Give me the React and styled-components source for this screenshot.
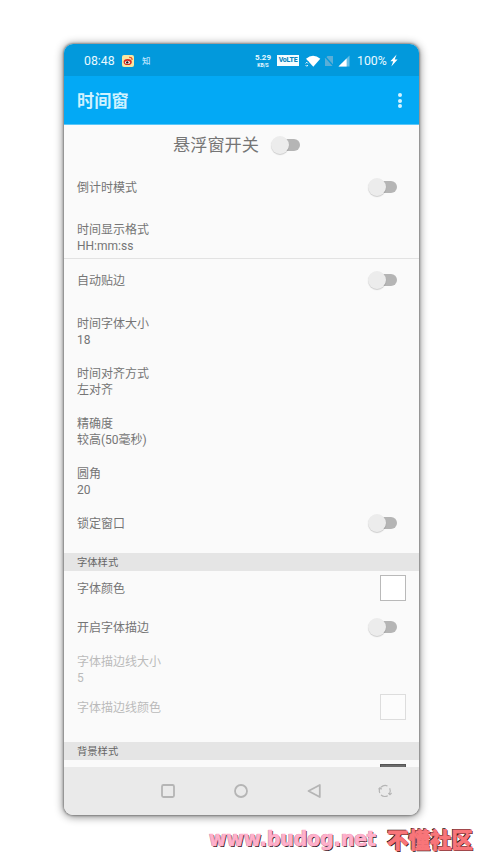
import styled, { createGlobalStyle } from "styled-components";

const countdownItems = [
	{ title: "倒计时模式", type: "switch", height: 42 },
	{ title: "时间显示格式", value: "HH:mm:ss" },
];

const windowItems = [
	{ title: "自动贴边", type: "switch" },
	{ title: "时间字体大小", value: "18" },
	{ title: "时间对齐方式", value: "左对齐" },
	{ title: "精确度", value: "较高(50毫秒)" },
	{ title: "圆角", value: "20" },
	{ title: "锁定窗口", type: "switch" },
];

const fontItems = [
	{ title: "字体颜色", type: "color", height: 35 },
	{ title: "开启字体描边", type: "switch" },
	{ title: "字体描边线大小", value: "5", disabled: true, compact: true },
	{ title: "字体描边线颜色", type: "color", height: 42, disabled: true },
];

const StatusBar = () => {
	return (
		<StatusContainer>
			<Clock>08:48</Clock>
			<WeiboIcon viewBox="0 0 12 12">
				<rect width="12" height="12" rx="2" fill="#f8e6a0" />
				<ellipse cx="5.7" cy="7" rx="4.1" ry="3.1" fill="#dc2b20" />
				<ellipse cx="5.5" cy="7.4" rx="2.5" ry="1.7" fill="#fff" />
				<circle cx="5.3" cy="7.4" r="1.2" fill="#26130f" />
				<path d="M7 2.3q3-.3 3.1 2.7" stroke="#e5502a" strokeWidth="1.2" fill="none" />
			</WeiboIcon>
			<Zhihu>知</Zhihu>
			<Speed>
				<b>5.29</b>
				<small>KB/S</small>
			</Speed>
			<Volte>VoLTE</Volte>
			<WifiIcon viewBox="0 0 16 12">
				<path d="M1 3.8Q8-2.1 15.3 3.8L8.3 11.7Z" fill="#fff" />
				<path d="M.3 6.5h3.4v5.5H.3z" fill="#0299dc" />
				<path d="M.6 8.5 1.8 7.2 3 8.5M.6 10 1.8 11.3 3 10" stroke="#fff" strokeWidth=".9" fill="none" />
			</WifiIcon>
			<SimIcon viewBox="0 0 10 12">
				<path d="M3.5 1H9v10H1V3.5z" fill="#5aaed7" />
				<path d="M.5 1 9.5 11" stroke="#0299dc" strokeWidth="1.3" />
			</SimIcon>
			<SignalIcon viewBox="0 0 12 12">
				<path d="M11.5.5v11H.5z" fill="#68bfe6" />
				<path d="M8.6 3.4v8.1H.5z" fill="#fff" />
			</SignalIcon>
			<Battery>100%</Battery>
			<BoltIcon viewBox="0 0 8 13">
				<path d="M6.6.5.4 7.3h2.8L1.3 12.5 7.6 5.4H4.7z" fill="#fff" />
			</BoltIcon>
		</StatusContainer>
	);
};

const SettingRow = ({ item }) => {
	if (item.value) {
		return (
			<ValueRow $compact={item.compact} $disabled={item.disabled}>
				<span>{item.title}</span>
				<span>{item.value}</span>
			</ValueRow>
		);
	}
	return (
		<ControlRow $height={item.height} $type={item.type} $disabled={item.disabled}>
			<span>{item.title}</span>
			{item.type === "switch" ? <Switch /> : <Swatch $disabled={item.disabled} />}
		</ControlRow>
	);
};

const SettingList = ({ items }) => items.map((item) => <SettingRow key={item.title} item={item} />);

const App = () => {
	return (
		<>
			<GlobalStyle />
			<Page>
				<Phone>
					<StatusBar />
					<AppBar>
						<h1>时间窗</h1>
						<MenuDots>
							<i />
							<i />
							<i />
						</MenuDots>
					</AppBar>
					<Content>
						<MainToggle>
							<span>悬浮窗开关</span>
							<Switch />
						</MainToggle>
						<Group>
							<SettingList items={countdownItems} />
						</Group>
						<SettingList items={windowItems} />
						<SectionTitle $gap={8}>字体样式</SectionTitle>
						<SettingList items={fontItems} />
						<SectionTitle $gap={14}>背景样式</SectionTitle>
						<NextSwatch />
					</Content>
					<NavBar>
						<svg viewBox="0 0 16 16">
							<rect x="2" y="2" width="12" height="12" rx="1.5" />
						</svg>
						<svg viewBox="0 0 16 16">
							<circle cx="8" cy="8" r="6" />
						</svg>
						<svg viewBox="0 0 16 16">
							<path d="M13.8 2v12L2.5 8z" />
						</svg>
						<RotateIcon viewBox="0 0 16 16">
							<path d="M4 4.2Q7 1.4 10.5 3M12.7 5.2q1.5 3-.4 6M10.8 12.7Q7 14.6 4 12M2.8 10Q1.8 7.4 3 5.2" />
							<path d="M1.5 6.4 3 4.7l1.7 1.5M14.6 10l-1.8 1.7-1.5-1.6" />
						</RotateIcon>
					</NavBar>
				</Phone>
				<Watermark>
					<SiteUrl>www.budog.net</SiteUrl>
					<SiteName>不懂社区</SiteName>
				</Watermark>
			</Page>
		</>
	);
};

export default App;

// Styled Components

const GlobalStyle = createGlobalStyle`
	* {
		box-sizing: border-box;
	}

	body {
		margin: 0;
		background: #ffffff;
		font-family: Roboto, "Noto Sans CJK SC", sans-serif;
	}
`;

const Page = styled.div`
	width: 483px;
	height: 860px;
	padding-top: 44px;
	overflow: hidden;
`;

const Phone = styled.div`
	display: flex;
	flex-direction: column;

	width: 355px;
	height: 771px;
	margin-left: 64px;

	overflow: hidden;

	background-color: #fafafa;
	border-radius: 9px;
	box-shadow: 0 0 2px 1px rgba(0, 0, 0, 0.3), 0 1px 9px 1px rgba(0, 0, 0, 0.45);
`;

const StatusContainer = styled.div`
	display: flex;
	align-items: center;
	flex: none;

	height: 32px;
	padding: 1px 20px 0;

	color: #e9f9ff;
	background-color: #0299dc;

	> * {
		flex: none;
	}
`;

const Clock = styled.span`
	width: 38px;
	font-size: 12.3px;
`;

const WeiboIcon = styled.svg`
	width: 12px;
	height: 12px;
`;

const Zhihu = styled.span`
	width: 113px;
	margin-left: 8px;
	font-size: 8.5px;
	font-weight: 500;
	line-height: 12px;
	color: #b9e4ff;
`;

const Speed = styled.span`
	display: flex;
	flex-direction: column;
	align-items: center;

	width: 16px;

	> b {
		font-size: 8px;
		line-height: 9px;
	}

	> small {
		font-size: 5px;
		font-weight: 700;
		line-height: 6px;
	}
`;

const Volte = styled.span`
	width: 22px;
	margin-left: 6px;

	font-size: 7px;
	font-weight: 800;
	line-height: 11px;
	letter-spacing: -0.2px;
	text-align: center;

	color: #0784bd;
	background-color: #f5fdff;
`;

const WifiIcon = styled.svg`
	width: 16px;
	height: 12px;
	margin-left: 6px;
`;

const SimIcon = styled.svg`
	width: 10px;
	height: 12px;
	margin-left: 3px;
`;

const SignalIcon = styled.svg`
	width: 12px;
	height: 12px;
	margin-left: 4px;
`;

const Battery = styled.span`
	width: 33px;
	margin-left: 7px;
	font-size: 12.3px;
`;

const BoltIcon = styled.svg`
	width: 8px;
	height: 13px;
`;

const AppBar = styled.div`
	display: flex;
	align-items: center;
	justify-content: space-between;
	flex: none;

	height: 49px;
	padding: 1px 17px 0 13px;

	background-color: #03a9f5;
	border-bottom: 1px solid #59c7f9;

	> h1 {
		margin: 0;
		font-size: 17.2px;
		font-weight: 700;
		line-height: 24px;
		color: #d0f2ff;
	}
`;

const MenuDots = styled.div`
	display: flex;
	flex-direction: column;
	gap: 1.4px;

	> i {
		width: 4px;
		height: 4px;
		border-radius: 50%;
		background-color: #d2f3ff;
	}
`;

const Content = styled.div`
	flex: 1;
	min-height: 0;
	overflow: hidden;

	font-size: 12px;
	line-height: 16px;
	color: #757575;
`;

const MainToggle = styled.div`
	display: flex;
	align-items: center;
	justify-content: center;
	gap: 12px;

	height: 40px;
	margin-bottom: 1px;
	padding-right: 10px;

	font-size: 17.2px;
	line-height: 24px;
`;

const Group = styled.div`
	border-bottom: 1px solid #e2e2e2;
`;

const ControlRow = styled.div`
	display: flex;
	align-items: center;
	justify-content: space-between;

	height: ${(props) => props.$height || 43}px;
	padding: 0 ${(props) => (props.$type === "switch" ? 22 : 13)}px 1px 13px;

	color: ${(props) => (props.$disabled ? "#bababa" : "#757575")};

	> span {
		padding-top: 2px;
	}
`;

const ValueRow = styled.div`
	display: flex;
	flex-direction: column;

	height: ${(props) => (props.$compact ? 37 : 50)}px;
	padding: ${(props) => (props.$compact ? 5 : 14)}px 13px 0;

	color: ${(props) => (props.$disabled ? "#bababa" : "#757575")};
`;

const Switch = styled.div`
	display: flex;
	align-items: center;

	width: 26px;
	height: 12px;
	margin-left: 3px;

	border-radius: 6px;
	background-color: #b5b5b5;

	&::before {
		content: "";
		flex: none;
		width: 18px;
		height: 18px;
		margin-left: -3px;
		border-radius: 50%;
		background-color: #ececec;
		box-shadow: 0 1px 1px rgba(0, 0, 0, 0.18);
	}
`;

const Swatch = styled.div`
	width: 26px;
	height: 26px;
	border: 1px solid ${(props) => (props.$disabled ? "#dddddd" : "#b9b9b9")};
	background-color: ${(props) => (props.$disabled ? "#fcfcfc" : "#ffffff")};
`;

const SectionTitle = styled.div`
	height: 18px;
	margin-top: ${(props) => props.$gap}px;
	padding: 1px 0 0 13px;

	font-size: 10.3px;
	line-height: 18px;
	color: #666666;

	background-color: #e5e5e5;
`;

const NextSwatch = styled.div`
	width: 26px;
	height: 26px;
	margin: 4px 13px 0 auto;
	background-color: #6b6b6b;
	border: 1px solid #555555;
`;

const NavBar = styled.div`
	display: flex;
	align-items: center;
	flex: none;
	gap: 57px;

	height: 48px;
	padding-left: 96px;

	background-color: #eaeaea;

	> svg {
		flex: none;
		width: 16px;
		height: 16px;
		fill: none;
		stroke: #b5b5b5;
		stroke-width: 1.8;
		stroke-linejoin: round;
	}
`;

const RotateIcon = styled.svg`
	margin-left: -2px;

	> path {
		stroke-width: 1.2;
	}
`;

const Watermark = styled.div`
	display: flex;
	align-items: center;
	gap: 9px;

	height: 45px;
	padding: 3px 0 0 209px;

	white-space: nowrap;
`;

const SiteUrl = styled.span`
	width: 169px;

	font-family: "DejaVu Sans Condensed", "DejaVu Sans", sans-serif;
	font-size: 21px;
	font-weight: 700;
	font-stretch: condensed;
	letter-spacing: -0.05px;

	color: #ffb0cb;
	-webkit-text-stroke: 0.7px #ffb0cb;
	text-shadow: 1px 1px 0 #24151b, -0.5px -0.5px 0 #a7717f;
`;

const SiteName = styled.span`
	font-family: "Noto Sans CJK SC", sans-serif;
	font-size: 21.5px;
	font-weight: 900;
	line-height: 28px;

	color: #f87579;
	-webkit-text-stroke: 0.8px #f87579;
	text-shadow: 1px 1px 0 #241010, -1px -1px 0 #241010;
`;
